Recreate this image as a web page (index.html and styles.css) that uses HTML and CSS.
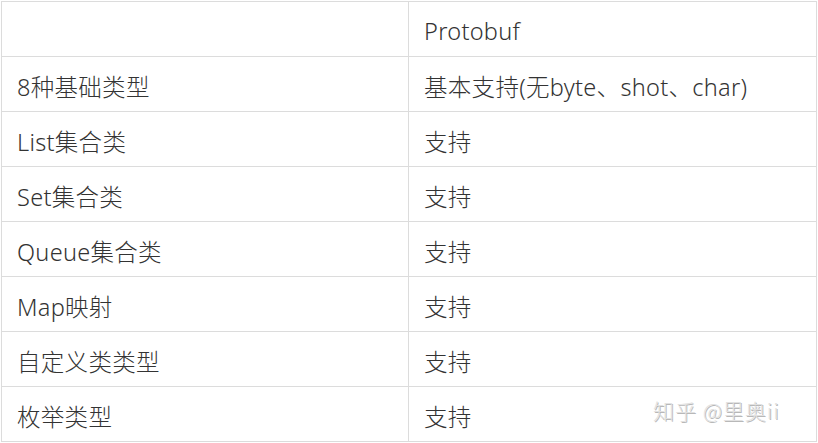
FILE: index.html
```html
<!DOCTYPE html>
<html lang="zh-CN">
<head>
<meta charset="utf-8">
<link rel="stylesheet" href="styles.css">
</head>
<body>
<div class="page">
<table class="grid">
  <tr><td></td><td>Protobuf</td></tr>
  <tr><td>8种基础类型</td><td>基本支持(无byte、shot、char)</td></tr>
  <tr><td>List集合类</td><td>支持</td></tr>
  <tr><td>Set集合类</td><td>支持</td></tr>
  <tr><td>Queue集合类</td><td>支持</td></tr>
  <tr><td>Map映射</td><td>支持</td></tr>
  <tr><td>自定义类类型</td><td>支持</td></tr>
  <tr><td>枚举类型</td><td>支持</td></tr>
</table>
<div class="watermark">知乎 @里奥ii</div>
</div>
</body>
</html>
```

FILE: styles.css
```css
html, body {
  margin: 0;
  padding: 0;
  background: #fff;
}
.page {
  position: relative;
  width: 818px;
  height: 443px;
  padding: 1px 0 0 1px;
  box-sizing: border-box;
}
.grid {
  border-collapse: collapse;
  width: 816px;
  table-layout: fixed;
  font-family: "Noto Sans", "Noto Sans CJK SC", sans-serif;
  font-size: 23.5px;
  font-weight: 300;
  letter-spacing: 0.3px;
  color: #333;
}
.grid td {
  border: 1px solid #dcdcdc;
  height: 55px;
  padding: 4px 0 0 15px;
  box-sizing: border-box;
  vertical-align: middle;
  white-space: nowrap;
}
.grid td:first-child {
  width: 407px;
}
.watermark {
  position: absolute;
  left: 653px;
  top: 395px;
  font-family: "Noto Sans CJK SC", sans-serif;
  font-size: 21px;
  font-weight: 300;
  color: #e2e2e2;
  letter-spacing: 1px;
  text-shadow: 1px 1px 0 #b8b8b8;
}
```
